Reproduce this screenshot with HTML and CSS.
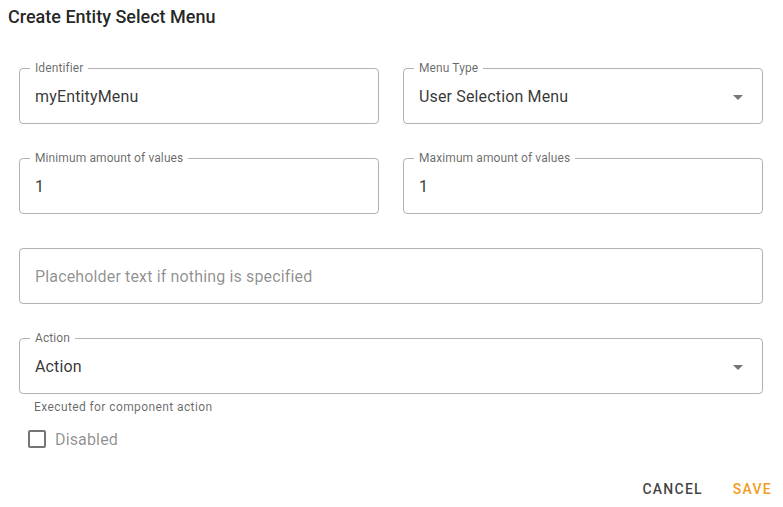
FILE: index.html
```html
<!DOCTYPE html>
<html>
<head>
<meta charset="utf-8">
<link rel="stylesheet" href="styles.css">
</head>
<body>
<div class="dialog">
  <h2 class="title">Create Entity Select Menu</h2>
  <div class="content">
    <div class="row two">
      <div class="field">
        <span class="label">Identifier</span>
        <div class="value">myEntityMenu</div>
      </div>
      <div class="field select">
        <span class="label">Menu Type</span>
        <div class="value">User Selection Menu</div>
        <svg class="arrow" viewBox="0 0 24 24" width="24" height="24"><path d="M7 10l5 5 5-5z"/></svg>
      </div>
    </div>
    <div class="row two">
      <div class="field">
        <span class="label">Minimum amount of values</span>
        <div class="value">1</div>
      </div>
      <div class="field">
        <span class="label">Maximum amount of values</span>
        <div class="value">1</div>
      </div>
    </div>
    <div class="row">
      <div class="field">
        <div class="value placeholder">Placeholder text if nothing is specified</div>
      </div>
    </div>
    <div class="row last">
      <div class="field select">
        <span class="label">Action</span>
        <div class="value">Action</div>
        <svg class="arrow" viewBox="0 0 24 24" width="24" height="24"><path d="M7 10l5 5 5-5z"/></svg>
      </div>
      <p class="helper">Executed for component action</p>
    </div>
    <label class="check">
      <span class="box"></span>
      <span class="check-label">Disabled</span>
    </label>
  </div>
  <div class="actions">
    <button class="btn cancel">Cancel</button>
    <button class="btn save">Save</button>
  </div>
</div>
</body>
</html>
```
FILE: styles.css
```css
* { box-sizing: border-box; }
html, body { margin: 0; padding: 0; background: #fff; }
body {
  font-family: Roboto, "Liberation Sans", Arial, sans-serif;
  color: rgba(0,0,0,0.87);
  width: 783px;
  height: 507px;
  overflow: hidden;
}
.dialog { display: flex; flex-direction: column; }
.title {
  margin: 0;
  padding: 1px 8px 0;
  font-size: 18px;
  font-weight: 500;
  line-height: 32px;
  letter-spacing: 0;
  color: rgba(0,0,0,0.87);
}
.content {
  padding: 35px 20px 0 19px;
  display: flex;
  flex-direction: column;
}
.row { margin-bottom: 34px; }
.row.last { margin-bottom: 0; }
.row.two {
  display: grid;
  grid-template-columns: 1fr 1fr;
  gap: 24px;
}
.field {
  position: relative;
  height: 56px;
  border: 1px solid rgba(0,0,0,0.3);
  border-radius: 4px;
  display: flex;
  align-items: center;
}
.label {
  position: absolute;
  left: 10px;
  top: -8px;
  padding: 0 5px;
  background: #fff;
  font-size: 12px;
  line-height: 14px;
  color: rgba(0,0,0,0.6);
  letter-spacing: 0.1px;
}
.value {
  flex: 1;
  padding: 1px 15px 0;
  font-size: 16px;
  line-height: 23px;
  letter-spacing: 0.15px;
  color: rgba(0,0,0,0.8);
}
.placeholder { color: rgba(0,0,0,0.45); }
.arrow {
  flex: none;
  margin-right: 12px;
  margin-top: 2px;
  fill: rgba(0,0,0,0.54);
}
.helper {
  margin: 3px 15px 0;
  font-size: 12px;
  line-height: 20px;
  letter-spacing: 0.4px;
  color: rgba(0,0,0,0.6);
}
.check {
  display: flex;
  align-items: center;
  margin: 2px 0 0 9px;
  height: 40px;
}
.box {
  width: 18px;
  height: 18px;
  border: 2px solid rgba(0,0,0,0.54);
  border-radius: 2px;
  margin-right: 9px;
}
.check-label {
  font-size: 16px;
  letter-spacing: 0.15px;
  color: rgba(0,0,0,0.45);
}
.actions {
  display: flex;
  justify-content: flex-end;
  gap: 14px;
  padding: 0 3px 0 0;
  margin-top: 12px;
}
.btn {
  border: 0;
  background: none;
  padding: 6px 8px;
  font-family: inherit;
  font-size: 14px;
  font-weight: 500;
  line-height: 24px;
  letter-spacing: 1.25px;
  text-transform: uppercase;
}
.cancel { color: rgba(0,0,0,0.75); }
.save { color: #f29c1f; }
```
